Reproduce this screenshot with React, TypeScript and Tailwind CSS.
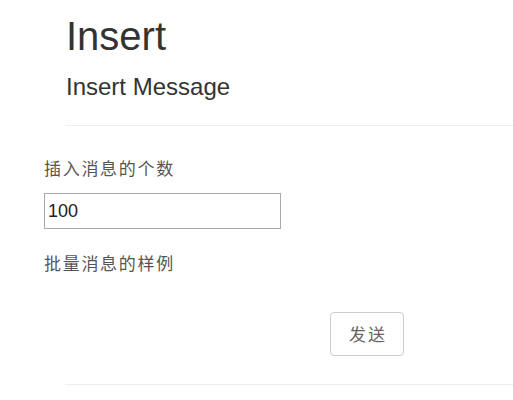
export default function App() {
  return (
    <div className="h-[400px] w-[513px] overflow-hidden bg-white font-['Liberation_Sans','Noto_Sans_CJK_SC',sans-serif] text-[#333]">
      {/* page header */}
      <div className="pl-[66px] pt-[16px]">
        <h1 className="text-[40px] leading-[40px] font-normal text-[#333]">Insert</h1>
        <h3 className="mt-[19px] text-[24px] leading-[24px] font-normal text-[#333]">Insert Message</h3>
      </div>
      <hr className="mt-[26px] ml-[65px] border-0 border-t border-[#eee]" />

      {/* form */}
      <div className="pl-[44px] font-['Noto_Sans_CJK_SC','Liberation_Sans',sans-serif]">
        <label className="mt-[32px] block text-[17px] leading-[20px] tracking-[1.7px] text-[#555]">插入消息的个数</label>
        <input
          type="text"
          defaultValue="100"
          className="mt-[15px] block h-[36px] w-[237px] border border-[#aaa] px-[3px] font-['Liberation_Sans',sans-serif] text-[18px] text-[#222] outline-none"
        />
        <label className="mt-[24px] block text-[17px] leading-[20px] tracking-[1.7px] text-[#555]">批量消息的样例</label>
        <div className="mt-[39px] pl-[286px]">
          <button className="h-[44px] w-[74px] rounded-[4px] border border-[#ccc] bg-white pl-[2px] text-[17px] tracking-[2px] text-[#666]">
            发送
          </button>
        </div>
      </div>
      <hr className="mt-[28px] ml-[65px] border-0 border-t border-[#eee]" />
    </div>
  );
}
